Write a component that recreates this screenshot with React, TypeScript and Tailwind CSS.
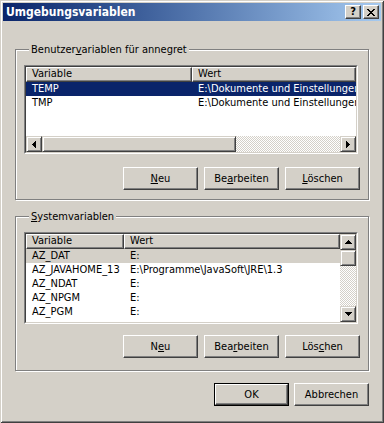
import React from 'react'

const face = "font-['DejaVu_Sans_Condensed','Liberation_Sans',sans-serif]"

function Tri({ dir }: { dir: 'up' | 'down' | 'left' | 'right' }) {
    if (dir === 'up' || dir === 'down') {
        const d = dir === 'up'
            ? 'M3 0h1v1h-1z M2 1h3v1h-3z M1 2h5v1h-5z M0 3h7v1h-7z'
            : 'M0 0h7v1h-7z M1 1h5v1h-5z M2 2h3v1h-3z M3 3h1v1h-1z'
        return (
            <svg width="7" height="4" viewBox="0 0 7 4" shapeRendering="crispEdges">
                <path d={d} fill="#000" />
            </svg>
        )
    }
    const d = dir === 'left'
        ? 'M0 3h1v1h-1z M1 2h1v3h-1z M2 1h1v5h-1z M3 0h1v7h-1z'
        : 'M0 0h1v7h-1z M1 1h1v5h-1z M2 2h1v3h-1z M3 3h1v1h-1z'
    return (
        <svg width="4" height="7" viewBox="0 0 4 7" shapeRendering="crispEdges">
            <path d={d} fill="#000" />
        </svg>
    )
}

function ScrollBtn({ dir }: { dir: 'up' | 'down' | 'left' | 'right' }) {
    return (
        <div className="w-[16px] h-[16px] shrink-0 flex items-center justify-center bg-[#d4d0c8] border border-t-[#d4d0c8] border-l-[#d4d0c8] border-r-[#404040] border-b-[#404040] shadow-[inset_1px_1px_0_#fff,inset_-1px_-1px_0_#808080]">
            <Tri dir={dir} />
        </div>
    )
}

function Button({ children, primary }: { children: React.ReactNode; primary?: boolean }) {
    return (
        <div className={primary ? "w-[75px] h-[23px] border border-black" : "w-[75px] h-[23px]"}>
            <button className="w-full h-full bg-[#d4d0c8] text-[11px] text-black leading-none border border-t-white border-l-white border-r-[#404040] border-b-[#404040] shadow-[inset_-1px_-1px_0_#808080]">
                {children}
            </button>
        </div>
    )
}

function HeadCell({ children, className }: { children: React.ReactNode; className: string }) {
    return (
        <div className={"h-[15px] flex items-center pl-[5px] bg-[#d4d0c8] border border-t-white border-l-white border-r-[#404040] border-b-[#404040] shadow-[inset_-1px_-1px_0_#808080] whitespace-nowrap overflow-hidden " + className}>
            {children}
        </div>
    )
}

type Row = { name: string; value: string; state?: 'sel' | 'gray' }

function Rows({ rows, col }: { rows: Row[]; col: string }) {
    return (
        <>
            {rows.map((r) => (
                <div
                    key={r.name}
                    className={
                        "flex h-[14px] shrink-0 items-center whitespace-nowrap overflow-hidden " +
                        (r.state === 'sel' ? "bg-[#0a246a] text-white" : r.state === 'gray' ? "bg-[#d4d0c8] text-black" : "text-black")
                    }
                >
                    <div className={"pl-[6px] overflow-hidden shrink-0 " + col}>{r.name}</div>
                    <div className="pl-[6px] min-w-0 overflow-hidden">{r.value}</div>
                </div>
            ))}
        </>
    )
}

function Sunken({ className, children }: { className: string; children: React.ReactNode }) {
    return (
        <div className={"w-[334px] mr-[1px] border border-t-[#808080] border-l-[#808080] border-r-white border-b-white " + className}>
            <div className="h-full bg-white border border-t-[#404040] border-l-[#404040] border-r-[#d4d0c8] border-b-[#d4d0c8] overflow-hidden">
                {children}
            </div>
        </div>
    )
}

const userRows: Row[] = [
    { name: 'TEMP', value: 'E:\\Dokumente und Einstellungen\\annegret\\Lokale Einstellungen\\Temp', state: 'sel' },
    { name: 'TMP', value: 'E:\\Dokumente und Einstellungen\\annegret\\Lokale Einstellungen\\Temp' },
]

const sysRows: Row[] = [
    { name: 'AZ_DAT', value: 'E:', state: 'gray' },
    { name: 'AZ_JAVAHOME_13', value: 'E:\\Programme\\JavaSoft\\JRE\\1.3' },
    { name: 'AZ_NDAT', value: 'E:' },
    { name: 'AZ_NPGM', value: 'E:' },
    { name: 'AZ_PGM', value: 'E:' },
]

export default function App() {
    return (
        <div className={"w-[384px] h-[423px] bg-[#d4d0c8] p-[3px] text-[11px] text-black " + face + " shadow-[inset_1px_1px_0_#d4d0c8,inset_-1px_-1px_0_#404040,inset_2px_2px_0_#fff,inset_-2px_-2px_0_#808080]"}>
            {/* title bar */}
            <div className="h-[18px] flex items-center justify-between pl-[3px] pr-[2px] bg-gradient-to-r from-[#0a246a] to-[#a6caf0]">
                <span className="text-white font-bold text-[12px] leading-none">Umgebungsvariablen</span>
                <div className="flex gap-[2px]">
                    <div className="w-[16px] h-[14px] flex items-center justify-center bg-[#d4d0c8] border border-t-white border-l-white border-r-[#404040] border-b-[#404040] shadow-[inset_-1px_-1px_0_#808080] font-bold text-[11px] leading-none pb-[1px]">?</div>
                    <div className="w-[16px] h-[14px] flex items-center justify-center bg-[#d4d0c8] border border-t-white border-l-white border-r-[#404040] border-b-[#404040] shadow-[inset_-1px_-1px_0_#808080]">
                        <svg width="8" height="7" viewBox="0 0 8 7" shapeRendering="crispEdges">
                            <path d="M0 0h2v1h-2z M6 0h2v1h-2z M1 1h2v1h-2z M5 1h2v1h-2z M2 2h4v1h-4z M3 3h2v1h-2z M2 4h4v1h-4z M1 5h2v1h-2z M5 5h2v1h-2z M0 6h2v1h-2z M6 6h2v1h-2z" fill="#000" />
                        </svg>
                    </div>
                </div>
            </div>

            {/* Benutzervariablen */}
            <fieldset className="min-w-0 ml-[12px] mt-[22px] w-[354px] pl-[8px] pr-[9px] pt-[9px] pb-[9px] border border-[#808080] shadow-[inset_1px_1px_0_#fff,1px_1px_0_#fff]">
                <legend className="ml-[5px] px-[2px] leading-[13px] bg-[#d4d0c8]">
                    Benutzer<span className="underline">v</span>ariablen für annegret
                </legend>
                <Sunken className="h-[89px]">
                    <div className="h-full flex flex-col">
                        <div className="flex shrink-0">
                            <HeadCell className="w-[166px] shrink-0">Variable</HeadCell>
                            <HeadCell className="flex-1">Wert</HeadCell>
                        </div>
                        <Rows rows={userRows} col="w-[166px]" />
                        <div className="flex-1" />
                        <div className="flex h-[16px] shrink-0">
                            <ScrollBtn dir="left" />
                            <div className="w-[194px] h-[16px] bg-[#d4d0c8] border border-t-[#d4d0c8] border-l-[#d4d0c8] border-r-[#404040] border-b-[#404040] shadow-[inset_1px_1px_0_#fff,inset_-1px_-1px_0_#808080]" />
                            <div className="flex-1 bg-[repeating-conic-gradient(#ffffff_0_25%,#d4d0c8_0_50%)] bg-[length:2px_2px]" />
                            <ScrollBtn dir="right" />
                        </div>
                    </div>
                </Sunken>
                <div className="flex justify-end gap-[6px] mt-[13px] -mr-[1px]">
                    <Button><span className="underline">N</span>eu</Button>
                    <Button>Be<span className="underline">a</span>rbeiten</Button>
                    <Button><span className="underline">L</span>öschen</Button>
                </div>
            </fieldset>

            {/* Systemvariablen */}
            <fieldset className="min-w-0 ml-[12px] mt-[10px] w-[354px] pl-[8px] pr-[9px] pt-[9px] pb-[12px] border border-[#808080] shadow-[inset_1px_1px_0_#fff,1px_1px_0_#fff]">
                <legend className="ml-[5px] px-[2px] leading-[13px] bg-[#d4d0c8]">
                    <span className="underline">S</span>ystemvariablen
                </legend>
                <Sunken className="h-[92px]">
                    <div className="h-full flex">
                        <div className="flex-1 min-w-0 flex flex-col overflow-hidden">
                            <div className="flex shrink-0">
                                <HeadCell className="w-[98px] shrink-0">Variable</HeadCell>
                                <HeadCell className="flex-1">Wert</HeadCell>
                            </div>
                            <Rows rows={sysRows} col="w-[98px]" />
                        </div>
                        <div className="w-[16px] flex flex-col">
                            <ScrollBtn dir="up" />
                            <div className="w-[16px] h-[16px] bg-[#d4d0c8] border border-t-[#d4d0c8] border-l-[#d4d0c8] border-r-[#404040] border-b-[#404040] shadow-[inset_1px_1px_0_#fff,inset_-1px_-1px_0_#808080]" />
                            <div className="flex-1 bg-[repeating-conic-gradient(#ffffff_0_25%,#d4d0c8_0_50%)] bg-[length:2px_2px]" />
                            <ScrollBtn dir="down" />
                        </div>
                    </div>
                </Sunken>
                <div className="flex justify-end gap-[6px] mt-[11px] -mr-[1px]">
                    <Button>N<span className="underline">e</span>u</Button>
                    <Button>Bea<span className="underline">r</span>beiten</Button>
                    <Button>Lös<span className="underline">c</span>hen</Button>
                </div>
            </fieldset>

            <div className="ml-[12px] mt-[12px] w-[354px] flex justify-end gap-[5px]">
                <Button primary>OK</Button>
                <Button>Abbrechen</Button>
            </div>
        </div>
    )
}
